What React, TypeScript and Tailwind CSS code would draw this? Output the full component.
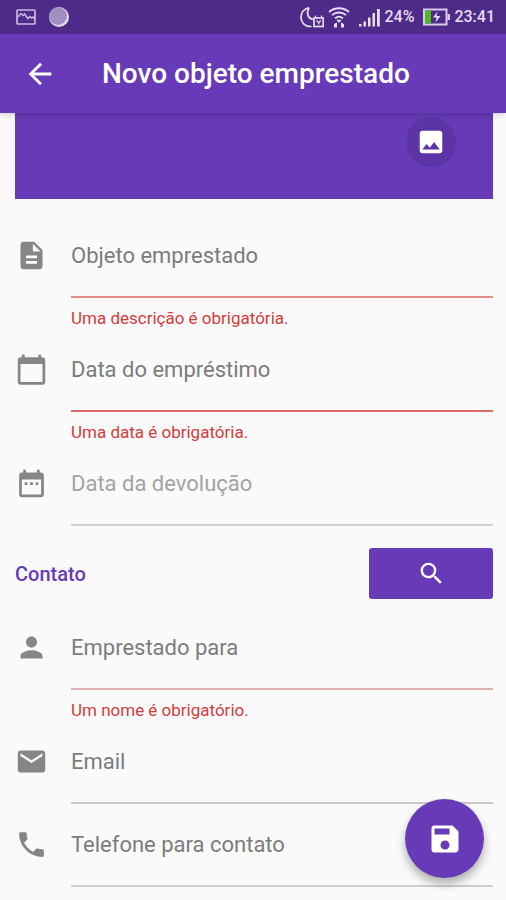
import React from "react";
import { IconType } from "react-icons";
import {
  MdArrowBack,
  MdCalendarToday,
  MdDateRange,
  MdDescription,
  MdEmail,
  MdImage,
  MdPerson,
  MdPhone,
  MdSave,
  MdSearch,
} from "react-icons/md";

interface FieldProps {
  name: string;
  label: string;
  icon: IconType;
  type?: string;
  error?: string;
  lineClass: string;
  textClass?: string;
}

const TextField: React.FC<FieldProps> = ({
  name,
  label,
  icon: Icon,
  type = "text",
  error,
  lineClass,
  textClass = "placeholder:text-[#7c7c7c]",
}) => (
  <div className="flex gap-[23px]">
    <label htmlFor={name} className="flex h-[83px] items-center pb-[2px]">
      <Icon size={33} className="text-[#868686]" />
    </label>
    <div className="min-w-0 flex-1">
      <input
        id={name}
        name={name}
        type={type}
        placeholder={label}
        aria-label={label}
        aria-invalid={!!error}
        className={`block h-[83px] w-full border-b-2 bg-transparent text-[22px] text-[#333] outline-none placeholder:opacity-100 ${lineClass} ${textClass}`}
      />
      {error && (
        <p className="h-[31px] pt-[10px] text-[17px] leading-5 text-[#d33c3c]">
          {error}
        </p>
      )}
    </div>
  </div>
);

const NotificationIcons = () => (
  <div className="flex items-center gap-3">
    <svg width="22" height="18" viewBox="0 0 22 18" fill="none">
      <rect x="2" y="2" width="18" height="14" rx="1" stroke="#c9bbe0" strokeWidth="1.7" />
      <path d="M3 9l3-3.500 2 2 1.500-1.500 3.500 4.500 2-2 1.500 1.500 1.500-1 2 2.500" stroke="#c9bbe0" strokeWidth="1.5" />
    </svg>
    <svg width="20" height="20" viewBox="0 0 20 20">
      <circle cx="10" cy="10" r="10" fill="#e4dcef" />
      <circle cx="9" cy="9" r="9" fill="#a18fc0" />
    </svg>
  </div>
);

const StatusIcons = () => (
  <div className="flex items-center gap-1 text-[16px] font-medium text-[#e6def2]">
    <svg width="24" height="24" viewBox="0 0 24 24" fill="none" stroke="currentColor" strokeWidth="1.7">
      <path d="M9 2.500C4 4 1 8 1 12.500c0 5 4 9 9 9h1.500M9 2.500c-3 6-1 11 4 12" />
      <rect x="14" y="13" width="9.200" height="8.500" />
      <path d="M15.500 12.500v-2M21.500 12.500v-2M16.500 15.500l2.200 2.200 2.200-2.200M18.700 17.500v2" strokeWidth="1.3" />
    </svg>
    <svg width="22" height="24" viewBox="0 0 22 24" fill="none" stroke="currentColor" strokeWidth="1.8">
      <path d="M1 7c5.500-5 14.500-5 20 0M4 10.200c4-3.600 10-3.600 14 0M7 13.400c2.500-2.200 5.500-2.200 8 0" />
      <path d="M8.300 14.800h5.400L11 18zM6 19l3-1.500v5H6zM16 19l-3-1.500v5h3z" fill="currentColor" stroke="none" />
    </svg>
    <svg width="22" height="24" viewBox="0 0 22 24" fill="currentColor" className="ml-1">
      <path d="M1 19h2.500v2.500H1zM5.500 16.500h2.500v5H5.500zM10 12.500h2.500v9H10zM14.500 8h2.500v13.500h-2.500zM19 4h2.800v17.500H19z" />
    </svg>
    <span>24%</span>
    <svg width="28" height="20" viewBox="0 0 28 20" fill="none" className="ml-1">
      <rect x="2" y="2.500" width="22.500" height="15" stroke="#d6cbe8" strokeWidth="2" />
      <path d="M25.500 7H28v6h-2.500z" fill="#d6cbe8" />
      <path d="M3 3.500h6v13H3z" fill="#4fb81f" />
      <path d="M15.500 4.500l-4.500 6h3.500l-1 5 5-6.500h-4z" fill="#e6def2" />
    </svg>
    <span>23:41</span>
  </div>
);

export default function App() {
  return (
    <div className="relative min-h-screen bg-[#fafafa] font-[Roboto,sans-serif]">
      <header className="relative shadow-md">
        <div className="flex h-[34px] items-center justify-between bg-[#4e2b89] pl-[15px] pr-[11px]">
          <NotificationIcons />
          <StatusIcons />
        </div>
        <div className="flex h-[79px] items-center bg-[#673ab7] pl-[23px] text-white">
          <button type="button" aria-label="Voltar">
            <MdArrowBack size={34} />
          </button>
          <h1 className="ml-[45px] text-[28px] font-medium">
            Novo objeto emprestado
          </h1>
        </div>
      </header>

      <form className="pl-[15px] pr-[13px]">
        <div className="mb-4 flex h-[86px] justify-end bg-[#673ab7] pr-[37px] pt-1">
          <button
            type="button"
            aria-label="Imagem"
            className="flex size-[50px] items-center justify-center rounded-full bg-[#5d34a5] text-white"
          >
            <MdImage size={30} />
          </button>
        </div>

        <TextField
          name="objeto"
          label="Objeto emprestado"
          icon={MdDescription}
          error="Uma descrição é obrigatória."
          lineClass="border-[#e28c8c]"
        />
        <TextField
          name="data_emprestimo"
          label="Data do empréstimo"
          icon={MdCalendarToday}
          error="Uma data é obrigatória."
          lineClass="border-[#dc6a6a]"
        />
        <TextField
          name="data_devolucao"
          label="Data da devolução"
          icon={MdDateRange}
          lineClass="border-[#d0d0d0]"
          textClass="placeholder:text-[#a3a3a3]"
        />

        <div className="mb-2 mt-[22px] flex items-center justify-between">
          <h2 className="text-[20px] font-medium text-[#673ab7]">Contato</h2>
          <button
            type="button"
            aria-label="Buscar contato"
            className="flex h-[51px] w-[124px] items-center justify-center rounded-[3px] bg-[#673ab7] text-white"
          >
            <MdSearch size={29} />
          </button>
        </div>

        <TextField
          name="nome"
          label="Emprestado para"
          icon={MdPerson}
          error="Um nome é obrigatório."
          lineClass="border-[#e0b0b0]"
        />
        <TextField
          name="email"
          type="email"
          label="Email"
          icon={MdEmail}
          lineClass="border-[#c8c8c8]"
        />
        <TextField
          name="telefone"
          type="tel"
          label="Telefone para contato"
          icon={MdPhone}
          lineClass="border-[#cfcfcf]"
        />
      </form>

      <button
        type="button"
        aria-label="Salvar"
        className="fixed bottom-[22px] right-[22px] flex size-[79px] items-center justify-center rounded-full bg-[#673ab7] text-white shadow-[0_6px_10px_rgba(0,0,0,0.3)]"
      >
        <MdSave size={36} />
      </button>
    </div>
  );
}
